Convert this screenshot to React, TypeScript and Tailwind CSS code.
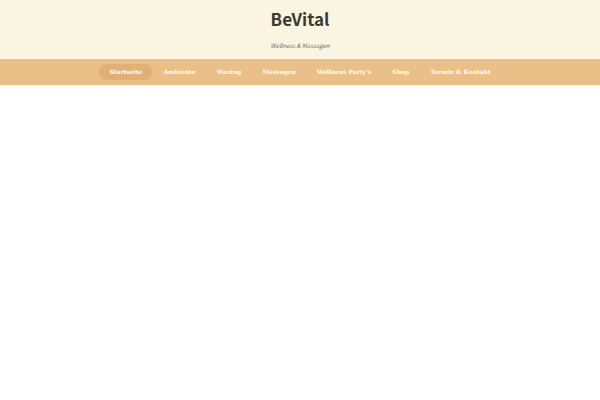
import React from 'react';

const NAV_ITEMS = [
  { label: 'Startseite', href: '#startseite', active: true },
  { label: 'Ambiente', href: '#ambiente' },
  { label: 'Waxing', href: '#waxing' },
  { label: 'Massagen', href: '#massagen' },
  { label: "Wellness Party's", href: '#partys' },
  { label: 'Shop', href: '#shop' },
  { label: 'Termin & Kontakt', href: '#kontakt' }
];

export default function App() {
  return (
    <div className="min-h-screen bg-white">
      <header className="bg-[#faf4e3] pt-[5px] pb-2 text-center font-['Noto_Sans_CJK_SC',sans-serif]">
        <h1 className="text-[17px] leading-7 font-bold text-[#3b3a32]">BeVital</h1>
        <p className="mt-2 text-[6px] leading-[10px] italic text-[#6f6a5f]">Wellness &amp; Massagen</p>
      </header>

      <nav className="bg-[#ebbf88] py-[5px]">
        <ul className="flex flex-wrap justify-center gap-x-px">
          {NAV_ITEMS.map(item => (
            <li key={item.label}>
              <a
                href={item.href}
                className={`block rounded-full px-[10px] text-[6px] leading-4 font-bold text-white font-['DejaVu_Serif',serif] ${item.active ? 'bg-[#e1b075]' : ''}`}
              >
                {item.label}
              </a>
            </li>
          ))}
        </ul>
      </nav>
    </div>
  );
}
